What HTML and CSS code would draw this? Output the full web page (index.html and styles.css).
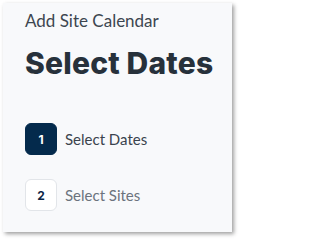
FILE: index.html
```html
<!DOCTYPE html>
<html>
<head>
<meta charset="utf-8">
<link rel="stylesheet" href="styles.css">
</head>
<body>
<div class="card">
  <div class="subtitle">Add Site Calendar</div>
  <h1 class="title">Select Dates</h1>
  <ol class="steps">
    <li class="step step-active"><span class="step-num">1</span><span class="step-label">Select Dates</span></li>
    <li class="step"><span class="step-num">2</span><span class="step-label">Select Sites</span></li>
  </ol>
</div>
</body>
</html>
```
FILE: styles.css
```css
html, body {
  margin: 0;
  padding: 0;
  background: #ffffff;
}
body {
  padding: 3px;
  width: 242px;
  height: 242px;
  box-sizing: border-box;
}
.card {
  width: 229px;
  height: 229px;
  box-sizing: border-box;
  background: #f8f9fb;
  box-shadow: 2px 2px 4px rgba(0, 0, 0, 0.38);
  padding: 7px 0 0 22px;
  font-family: "Lato", "Liberation Sans", sans-serif;
}
.subtitle {
  font-size: 17px;
  line-height: 21px;
  color: #3d4650;
}
.title {
  margin: 14px 0 0 0;
  font-family: "Inter", "Liberation Sans", sans-serif;
  font-weight: 800;
  font-size: 30px;
  line-height: 36px;
  color: #27313b;
  letter-spacing: 0.2px;
}
.steps {
  list-style: none;
  margin: 42px 0 0 0;
  padding: 0;
  display: flex;
  flex-direction: column;
  gap: 24px;
}
.step {
  display: flex;
  align-items: center;
  gap: 8px;
}
.step-num {
  width: 32px;
  height: 32px;
  box-sizing: border-box;
  border-radius: 6px;
  background: #ffffff;
  border: 1px solid #e2e5e9;
  display: flex;
  align-items: center;
  justify-content: center;
  font-family: "Inter", "Liberation Sans", sans-serif;
  font-weight: 700;
  font-size: 12px;
  color: #0b2545;
}
.step-active .step-num {
  background: #042a4c;
  border-color: #042a4c;
  color: #ffffff;
}
.step-label {
  font-size: 15px;
  line-height: 20px;
  color: #6b737d;
}
.step-active .step-label {
  color: #3a434d;
}
```
